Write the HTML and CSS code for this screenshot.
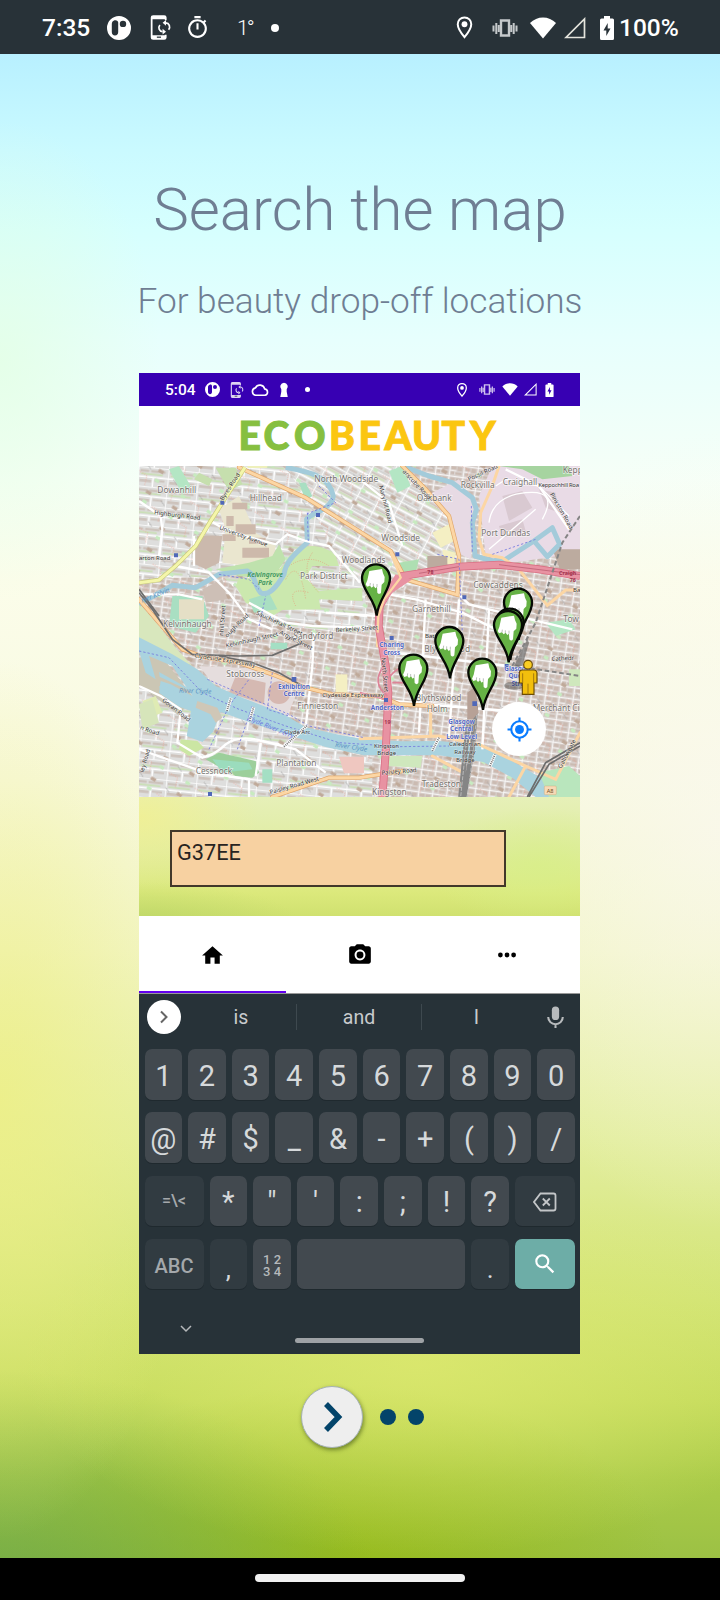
FILE: index.html
```html
<!DOCTYPE html>
<html lang="en">
<head>
<meta charset="utf-8">
<title>EcoBeauty onboarding</title>
<link rel="stylesheet" href="styles.css">
</head>
<body>
<svg class="defs" width="0" height="0" aria-hidden="true">
  <defs>
    <symbol id="i-p" viewBox="0 0 24 24"><path fill-rule="evenodd" fill="currentColor" d="M12 0a12 12 0 1 1 0 24a12 12 0 0 1 0-24zM7.500 4.300C5.500 5 4.800 6.500 4.800 8.500v7.500c0 2 1.200 3.500 3.200 3.500s3.200-1.500 3.200-3.500V6.500c0-1.500-1.500-2.700-3.700-2.200zM16 4.700a3.200 3.200 0 1 0 0 6.400a3.200 3.200 0 0 0 0-6.400z"/></symbol>
    <symbol id="i-phone" viewBox="0 0 24 24"><path fill="none" stroke="currentColor" stroke-width="1.700" d="M17 5V2.500q0-1.500-1.500-1.500H5Q3.500 1 3.500 2.500v19Q3.500 23 5 23h10.500q1.500 0 1.500-1.500V19"/><path fill="currentColor" d="M3.500 1H17v3H3.500zM3.500 19.500H17V23H3.500z"/><path stroke="#283238" stroke-width="1.200" d="M8.500 21.300h4"/><path fill="none" stroke="currentColor" stroke-width="1.600" d="M14 16c-3.300-.3-4.600-4-2.600-6.500M17 7.500c3.500.2 4.800 4 2.800 6.700"/><path fill="currentColor" d="M17.300 4.700v5.600l-3.300-2.800zM14 13.200v5.600l3.300-2.800z"/></symbol>
    <symbol id="i-timer" viewBox="0 0 24 24"><path fill="currentColor" d="M15 1H9v2h6V1zm-4 13h2V8h-2v6zm8.030-6.610 1.420-1.420c-.43-.51-.9-.99-1.410-1.410l-1.420 1.420A8.960 8.960 0 0 0 12 4a9 9 0 1 0 7.030 3.390zM12 20a7 7 0 1 1 0-14 7 7 0 0 1 0 14z"/></symbol>
    <symbol id="i-pin" viewBox="0 0 24 24"><path fill="none" stroke="currentColor" stroke-width="1.900" d="M12 2.300c-3.800 0-6.500 2.900-6.500 6.600C5.500 13.500 12 21.300 12 21.300s6.500-7.800 6.500-12.400c0-3.700-2.700-6.600-6.500-6.600z"/><circle cx="12" cy="8.900" r="2.800" fill="currentColor"/></symbol>
    <symbol id="i-vibrate" viewBox="0 0 26 24"><path fill="none" stroke="currentColor" stroke-width="2.400" d="M9 4.500h8v15H9z"/><path stroke="currentColor" stroke-width="2" d="M1.500 9.500v6M4.300 7v11M6.800 9v7M19.200 9v7M21.700 7v11M24.500 9.500v6"/></symbol>
    <symbol id="i-wifi" viewBox="0 0 26 22"><path fill="currentColor" d="M0 6C7-1.500 19-1.500 26 6L13 21.500z"/></symbol>
    <symbol id="i-signal" viewBox="0 0 22 22"><path fill="none" stroke="currentColor" stroke-width="1.700" d="M20.500 2v18.500H2z"/></symbol>
    <symbol id="i-battery" viewBox="0 0 14 24"><path fill-rule="evenodd" fill="currentColor" d="M4 0h6v2.500h2.500Q14 2.500 14 4v18.500q0 1.500-1.500 1.500h-11Q0 24 0 22.500V4q0-1.500 1.500-1.500H4zM7.700 7 3.500 14.500h2.800V20l4.200-7.500H7.700z"/></symbol>
    <symbol id="i-cloud" viewBox="0 0 24 24"><path fill="none" stroke="currentColor" stroke-width="2.200" d="M6.500 19a5 5 0 0 1-.5-9.900A6.500 6.500 0 0 1 18.200 10.500 4.300 4.300 0 0 1 18.500 19z"/></symbol>
    <symbol id="i-keyhole" viewBox="0 0 12 20"><path fill="currentColor" d="M6 1a5.200 5.200 0 0 1 3.600 8.800V13L11 20H1l1.400-7V9.800A5.200 5.200 0 0 1 6 1z"/></symbol>
    <g id="marker">
      <path d="M2 110C-2 60-42 35-42-2A42 42 0 0 1 42-2C42 35 7 60 2 110z" fill="#66b245" stroke="#050a04" stroke-width="7"/>
      <path d="M-20-24 18-30 21-17 26-6 25 9 17 17 15 41Q10 48 4 41L3 24-2 28-7 21-13 26-18 20-27 23-31 16-26 4z" fill="#fff"/>
      <path d="M-8 22v-8M-18 20l1-8M3 24v-9" stroke="#9aa39a" stroke-width="2"/>
    </g>
    <pattern id="blocks" width="42" height="34" patternUnits="userSpaceOnUse" patternTransform="rotate(8)">
      <rect width="42" height="34" fill="#dbd5d2"/><path d="M5 5h15v10H5zm18 0h15v13H23zM5 21h10v9H5zm14 1h19v8H19z" fill="#cbbbb2"/><path d="M0 0h42M0 0v34" stroke="#fff" stroke-width="4"/><path d="M0 18h21" stroke="#f7f5f4" stroke-width="2.500"/>
    </pattern>
    <pattern id="terraces" width="62" height="46" patternUnits="userSpaceOnUse" patternTransform="rotate(28)">
      <rect width="62" height="46" fill="#dfdfde"/><path d="M5 7h50v5H5zm0 23h24v7H5zm32 0h17v8H37z" fill="#cfc4bd"/><path d="M7 14h45v5H7z" fill="#cfe0bb"/><path d="M0 0h62M0 24h62M0 0v46" stroke="#fff" stroke-width="5"/><path d="M5 42h52" stroke="#c9c7c6" stroke-width="2"/>
    </pattern>
    <pattern id="west" width="90" height="58" patternUnits="userSpaceOnUse" patternTransform="rotate(6)">
      <rect width="90" height="58" fill="#dededd"/><path d="M6 8h26v7H6zm32 0h44v7H38zM6 38h35v8H6zm45-2h30v6H51z" fill="#cdc3bc"/><path d="M0 0h90M0 30h90M0 0v58M46 30v28" stroke="#fff" stroke-width="4.500"/><path d="M8 21h66" stroke="#c9dfb5" stroke-width="5"/>
    </pattern>
    <pattern id="speckle" width="91" height="73" patternUnits="userSpaceOnUse" patternTransform="rotate(31)">
      <path d="M5 12h30l9 28" fill="none" stroke="#f09a88" stroke-width="2" stroke-dasharray="3 4"/><path d="M57 48h17v10H57z" fill="#bfa999"/><path d="M62 5h14v10H62z" fill="#c7ebc0"/><path d="M18 55l18 8" stroke="#a8a8a8" stroke-width="2"/>
    </pattern>
  </defs>
</svg>

<main class="screen">
  <header class="status">
    <span class="status-time">7:35</span>
    <svg class="s-p"><use href="#i-p"/></svg>
    <svg class="s-phone"><use href="#i-phone"/></svg>
    <svg class="s-timer"><use href="#i-timer"/></svg>
    <span class="s-temp">1°</span>
    <i class="s-dot"></i>
    <span class="spacer"></span>
    <svg class="s-pin"><use href="#i-pin"/></svg>
    <svg class="s-vibrate"><use href="#i-vibrate"/></svg>
    <svg class="s-wifi"><use href="#i-wifi"/></svg>
    <svg class="s-signal"><use href="#i-signal"/></svg>
    <svg class="s-battery"><use href="#i-battery"/></svg>
    <span class="status-pct">100%</span>
  </header>

  <section class="intro">
    <h1 class="title">Search the map</h1>
    <p class="subtitle">For beauty drop-off locations</p>

    <div class="phone">
      <div class="p-status">
        <span class="p-time">5:04</span>
        <svg class="p-p"><use href="#i-p"/></svg>
        <svg class="p-phone"><use href="#i-phone"/></svg>
        <svg class="p-cloud"><use href="#i-cloud"/></svg>
        <svg class="p-key"><use href="#i-keyhole"/></svg>
        <i class="p-dot"></i>
        <span class="spacer"></span>
        <svg class="p-pin"><use href="#i-pin"/></svg>
        <svg class="p-vibrate"><use href="#i-vibrate"/></svg>
        <svg class="p-wifi"><use href="#i-wifi"/></svg>
        <svg class="p-signal"><use href="#i-signal"/></svg>
        <svg class="p-battery"><use href="#i-battery"/></svg>
      </div>

      <div class="brand">
        <svg width="441" height="60" viewBox="0 0 441 60">
          <g class="brand-text">
            <text x="99.500 124.500 155" y="43.500" fill="#86bf40" stroke="#86bf40">ECO</text>
            <text x="190 219.500 245.500 273 302.500 331" y="43.500" fill="#fbc611" stroke="#fbc611">BEAUTY</text>
          </g>
        </svg>
      </div>

      <div class="map">
        <svg class="map-art" viewBox="0 0 1323 993" width="441" height="331">
          <rect width="1323" height="993" fill="url(#blocks)"/>
          <path d="M0 0H430L660 230 690 500 400 480 250 330 0 340z" fill="url(#west)"/>
          <path d="M440 0H800L950 160 960 300 700 400 560 200z" fill="url(#terraces)"/>
          <path d="M0 560 250 735 440 800 700 880 700 993H0z" fill="url(#west)"/>
          <rect width="1323" height="993" fill="url(#speckle)"/>
          <path d="M1020 90 1060 0H1323V260L1120 290 1040 270z" fill="#e9dbe6"/>
          <path d="M860 90 960 40 1010 120 995 280 955 260 930 150z" fill="#e7dae4"/>
          <path d="M1080 0H1290L1300 30 1210 40 1150 10z" fill="#a6d4a0"/>
          <path d="M1090 90l60-15 30 50-70 40zM1200 70l50 10 10 60-40-15zM1080 180l70-20 10 35-70 20z" fill="#d9c9d1"/>
          <path d="M1050 170Q1060 90 1160 80T1210 160M1070 60 1100 40 1200 60 1290 150M1050 250 1190 130" stroke="#fff" stroke-width="4" fill="none"/>
          <path d="M175 210H250L240 290 200 310 160 290z" fill="#cbb9ad"/>
          <path d="M240 130 300 90 350 200 410 240 400 310 250 290 260 190z" fill="#eae6cf"/>
          <path d="M290 175h60v30h-60zM310 245h80v30h-80zM280 110h45v20h-45zM250 205h40v20h-40zM330 215h50v18h-50zM262 150h22v30h-22z" fill="#cdb9ab"/>
          <path d="M230 310 330 290 400 270 420 235 440 280 400 340 300 330z" fill="#bfe2ad"/>
          <path d="M300 335C360 340 420 335 450 270 490 225 560 235 590 270L600 300 520 300 500 335 540 375 670 365V405L540 400 545 430 430 432 400 450 320 410 290 360z" fill="#cbe8ae"/>
          <path d="M450 300q60-40 120 0M440 340q40-70 60 60M470 420q-30-60 40-40M520 260q-40 60 20 120" fill="none" stroke="#e59a78" stroke-width="2" stroke-dasharray="3 4"/>
          <path d="M330 400l60-20 25 50-70 10zM100 390h90l20 60-40 50-80-20zM480 50h20l20 40-20 15z" fill="#a9dfc2"/>
          <path d="M120 400h75v60h-75z" fill="#e5dfc6"/>
          <path d="M190 370 250 340 265 400 200 410z" fill="#cdbfb6"/>
          <path d="M90 10l30-10 35 60-25 25zM750 15l40-15 25 60-40 20zM1220 470l70-10 20 30-60 20z" fill="#b4e6c4"/>
          <path d="M230 5h60l20 50-40 20zM180 20l40 20-10 20-45-20z" fill="#c6dfae"/>
          <path d="M880 200l50-25 15 50-40 20zM910 250l40 10-5 40-30-10z" fill="#f4efc3"/>
          <path d="M865 270h60v40h-60zM1240 250h83v60h-60z" fill="#bcab9f"/>
          <path d="M780 290l60-10-10 40-50 5z" fill="#aedfb2"/>
          <path d="M0 410 60 480 110 545 160 600 0 520z" fill="#d8e7bd"/>
          <path d="M180 600 400 610 470 690 440 760 300 690 220 650z" fill="#e5dddd"/>
          <path d="M290 630 380 650 375 715 270 680z" fill="#d5b9b2"/><circle cx="420" cy="680" r="34" fill="#d6b8b1"/>
          <path d="M0 575 60 560 160 690 120 750 0 655z" fill="#cbc6b4"/>
          <path d="M10 705 50 690 70 740 30 755z" fill="#dfebb4"/>
          <path d="M0 514 100 565 175 610 230 660 310 695 430 742 500 784 600 806 675 820 790 826 900 825 1033 836 1110 880 1180 920 1260 972 1310 993H1190L1120 935 1033 888 900 868 675 868 560 843 440 804 330 768 245 738 222 798 190 828 143 810 156 735 120 722 60 680 65 645 95 655 160 690 100 600 30 570 50 640 20 620 0 555z" fill="#aad3df"/>
          <path d="M60 618 150 668 155 676 62 632zM66 655 150 700 150 706 60 664z" fill="#aad3df"/>
          <path d="M175 705l60 20 15 30-20 15-15-25-45-20z" fill="#cfc7b7"/>
          <path d="M125 820l50 5 20 20-45 25-30-20z" fill="#cbe6a3"/>
          <path d="M200 880 240 860 350 885 360 920 340 935 290 930z" fill="#9ccf9b"/>
          <path d="M220 880l110 10 10 20-90 10z" fill="#9bdcbd"/>
          <path d="M0 715 40 700 60 770 10 790z" fill="#d6e5ba"/>
          <path d="M590 625h35v55h-35z" fill="#f4efc3"/>
          <path d="M370 910h30v40h-30zM395 530h50v20h-50z" fill="#a4dfc4"/>
          <path d="M600 872h75v50h-60z" fill="#efc7c0"/>
          <path d="M1200 920 1290 900 1323 930V993H1230z" fill="#b9e6bd"/>
          <path d="M1290 610h33v50h-33zM740 870h110l-5 35-100-5z" fill="#cfe8bd"/>
          <g fill="none" stroke="#a3cbda" stroke-width="15" stroke-linejoin="round">
            <path d="M440 4C520 20 570 30 583 90 575 135 515 140 503 160L505 230C460 270 440 290 435 325 410 370 385 390 365 380 345 360 350 325 325 315L240 325 170 365 100 358 0 415"/>
            <path d="M790 0 870 30 940 50 1000 95 1012 130 1000 170 1008 270 1060 285 1100 280 1185 225 1240 185 1262 235 1225 272 1185 225"/>
          </g>
          <g fill="none" stroke="#fff" stroke-width="7">
            <path d="M0 105 65 150 70 190 60 270M215 165 240 180 300 205 410 235 445 205 500 225 570 240 663 350M165 210V300M110 300 210 320 270 380 330 460 400 490M330 410 440 470 520 480 680 485"/>
            <path d="M0 660 65 690 125 730 115 830 190 875Q230 865 260 835 300 805 370 825L470 850 560 920M500 784 520 600 525 500M720 380 830 400 970 440 1090 500M960 385 990 415 1090 440 1300 490M0 850 200 920 330 940V993M350 930 365 830M718 450 560 440M0 385 120 385 190 400"/>
            <path d="M720 700 920 720 1110 735M760 560 1110 600M860 400 840 800M960 400 930 810M1050 430 1030 850"/>
            <path d="M663 40 750 110 790 240M1100 10 1200 60 1290 190"/>
          </g>
          <g fill="none" stroke="#e0a569" stroke-width="13" stroke-linecap="round"><path d="M300 4 500 95 675 205 755 255 800 340 955 386 960 270 930 150 860 70 790 0"/><path d="M0 400 60 470 130 550 200 575 300 590 400 625 500 665 580 685 720 690 780 715 880 720"/><path d="M400 993 570 935 660 935 790 915"/></g>
          <g fill="none" stroke="#fcd6a4" stroke-width="9" stroke-linecap="round"><path d="M300 4 500 95 675 205 755 255 800 340 955 386 960 270 930 150 860 70 790 0"/><path d="M1080 0 1060 60 1025 140 1020 220 1035 265 1090 275 1140 310 1225 418 1280 372H1323"/><path d="M0 400 60 470 130 550 200 575 300 590 400 625 500 665 580 685 720 690 780 715 880 720"/><path d="M400 993 570 935 660 935 790 915"/><path d="M663 818 900 810 1020 835 1160 900 1250 940 1323 800M875 720 875 810M720 450 715 540M1160 900 1110 993M880 870 990 930 970 993"/></g>
          <path d="M318 4 250 110 215 165 170 240 110 300 60 342 0 350" fill="none" stroke="#c9ca7a" stroke-width="13"/>
          <path d="M318 4 250 110 215 165 170 240 110 300 60 342 0 350" fill="none" stroke="#f4f6aa" stroke-width="9"/>
          <path d="M1323 330 1200 310 1080 296 960 302 840 322 790 330 750 370 722 420 719 480 740 600 748 680 740 860 730 993" fill="none" stroke="#da7185" stroke-width="24"/>
          <path d="M1323 330 1200 310 1080 296 960 302 840 322 790 330 750 370 722 420 719 480 740 600 748 680 740 860 730 993" fill="none" stroke="#e892a2" stroke-width="19"/>
          <path d="M770 325 820 340 760 380 725 430 735 380z" fill="#e892a2"/>
          <path d="M755 260 785 335 735 400 718 450 716 500" fill="none" stroke="#fcd6a4" stroke-width="7"/>
          <path d="M663 680 740 700M745 640q40-50 60-30M735 600q-40 50 10 90M760 650h70" stroke="#dc8497" stroke-width="5" fill="none"/>
          <path d="M960 302 840 322M1080 296 1323 326" stroke="#b3546a" stroke-width="2" fill="none"/>
          <g fill="none" stroke="#6d6d6d" stroke-width="5"><path d="M0 380 40 430 100 520 160 565 300 570 400 568 490 530M240 570 340 590 420 620 490 660"/><path d="M0 370 60 450M1165 993 1220 890 1323 830M1170 993 1230 895 1323 840"/></g>
          <g fill="none" stroke="#858585" stroke-width="6" stroke-dasharray="14 8"><path d="M1323 150 1270 230 1190 470 1120 600M1130 600 1323 630"/></g>
          <path d="M1000 725 985 800 965 993M1010 720 1000 850 975 993" fill="none" stroke="#858585" stroke-width="15"/>
          <path d="M1000 725 985 800 965 993M1014 730 1004 850 985 993" fill="none" stroke="#b9b9b9" stroke-width="3" stroke-dasharray="12 4"/>
          <path d="M1125 600 1165 520 1170 530 1150 600z" fill="#666" opacity=".65"/>
          <path d="M985 680 1010 660 1018 740 985 780z" fill="#b7a196"/>
          <g fill="none" stroke="#7378df" stroke-width="2.500" stroke-dasharray="7 6"><path d="M0 555 90 575 190 680 300 730 440 780 600 830 780 842 930 840"/><path d="M205 640 320 690 450 745 510 780 675 815M210 850 270 720 330 640M240 325 330 340 360 370M505 140 508 230M540 60 590 110 500 145M360 480 380 390M895 265 960 280 970 500M997 120 1000 260M1060 265 1190 220M295 850 340 720M400 620 385 730 450 750"/></g>
          <path d="M264 735 276 695M332 765 344 723M435 842 505 778M880 855 900 815M1053 900 1068 865" stroke="#fff" stroke-width="10"/><path d="M264 735 276 695M332 765 344 723M435 842 505 778M880 855 900 815M1053 900 1068 865" stroke="#777" stroke-width="6" stroke-dasharray="3 3"/>
          <path fill="#5068b8" d="M244 104h12v12h-12zM531 141h12v12h-12zM105 262h12v12h-12zM769 259h12v12h-12zM970 388h12v12h-12zM458 633h14v14h-14zM752 510h12v12h-12zM735 696h12v12h-12zM1000 706h14v14h-14zM207 978h12v12h-12zM1097 594h12v12h-12z"/>
          <rect x="325" y="-20" width="60" height="26" rx="4" fill="#eef0bb"/>
          <g class="place">
            <text x="55" y="82">Dowanhill</text><text x="332" y="104">Hillhead</text><text x="526" y="48">North Woodside</text><text x="833" y="104">Oakbank</text><text x="965" y="65">Rockvilla</text><text x="1091" y="58">Craighall</text><text x="1271" y="21">Kepp</text><text x="727" y="225">Woodside</text><text x="608" y="290">Woodlands</text><text x="1027" y="210">Port Dundas</text><text x="483" y="340">Park District</text><text x="1003" y="366">Cowcaddens</text><text x="819" y="438">Garnethill</text><text x="72" y="482">Kelvinhaugh</text><text x="1273" y="467">Tow</text><text x="463" y="518">Sandyford</text><text x="262" y="634">Stobcross</text><text x="475" y="728">Finnieston</text><text x="412" y="901">Plantation</text><text x="170" y="924">Cessnock</text><text x="856" y="558">Blythswood</text><text x="830" y="706">Blythswood</text><text x="863" y="739">Holm</text><text x="1181" y="735">Merchant Ci</text><text x="848" y="964">Tradeston</text><text x="699" y="988">Kingston</text>
          </g>
          <g class="road">
            <text transform="translate(45 145) rotate(7)">Highburgh Road</text><text transform="translate(252 105) rotate(-57)">Byres Road</text><text transform="translate(240 190) rotate(20)">University Avenue</text><text x="0" y="283">arton Road</text><text transform="translate(720 60) rotate(76)">Maryhill Road</text><text transform="translate(790 18) rotate(47)">arscube Road</text><text transform="translate(990 46) rotate(-25)">Possil Road</text><text x="1198" y="62" textLength="122">Keppochhill Roa</text><text transform="translate(1232 85) rotate(60)">Pinkston Road</text><text transform="translate(350 445) rotate(25)">Sauchiehall Street</text><text transform="translate(253 510) rotate(-86)">nhill Street</text><text transform="translate(265 515) rotate(-45)">ough Road</text><text transform="translate(262 545) rotate(-13)">Kelvinhaugh Street</text><text transform="translate(420 503) rotate(27)">Argyle Street</text><text transform="translate(166 574) rotate(9)">Clydeside Expressway</text><text x="550" y="693">Clydeside Expressway</text><text transform="translate(68 705) rotate(38)">Govan Road</text><text transform="translate(2 790) rotate(18)">n Road</text><text transform="translate(14 920) rotate(-74)">ley Road</text><text transform="translate(394 985) rotate(-16)">Paisley Road West</text><text transform="translate(728 927) rotate(-5)">Paisley Road</text><text x="858" y="515">Bath Street</text><text transform="translate(727 575) rotate(85)">North Street</text><text transform="translate(1238 585) rotate(-3)">Cathedr</text><text x="436" y="804">Clyde Arc</text><text x="705" y="845">Kingston</text><text x="715" y="867">Bridge</text><text x="930" y="840">Caledonian</text><text x="946" y="864">Railway</text><text x="951" y="888">Bridge</text><text transform="translate(590 499) rotate(-4)">Berkeley Street</text><text x="1302" y="379">Ba</text><text transform="translate(1267 908) rotate(-62)">Gallowgate</text>
          </g>
          <g class="station"><text x="465" y="669">Exhibition</text><text x="465" y="691">Centre</text><text x="758" y="544">Charing</text><text x="758" y="566">Cross</text><text x="745" y="732">Anderston</text><text x="968" y="774">Glasgow</text><text x="968" y="796">Central</text><text x="968" y="818">Low Level</text><text x="1136" y="615">Glasgow</text><text x="1140" y="637">Queen</text><text x="1146" y="659">Street</text></g>
          <g class="water"><text transform="translate(120 680) rotate(2)">River Clyde</text><text transform="translate(588 842) rotate(9)">River Clyde</text><text transform="translate(10 410) rotate(-22)">iver Kelvin</text><text class="ferry" transform="translate(325 762) rotate(22)">Clyde River Ferry</text></g>
          <g class="park"><text x="378" y="333">Kelvingrove</text><text x="378" y="358">Park</text></g>
          <g class="shield"><text x="865" y="325">78</text><text x="1260" y="328">Craigh</text><text x="1292" y="347">76</text><text x="736" y="773">19</text></g>
          <rect x="1216" y="960" width="36" height="26" rx="3" fill="#f8d9b5" stroke="#c49a65"/><text class="a8" x="1223" y="980">A8</text>
          <ellipse cx="1125" cy="659" rx="30" ry="12" fill="#333" opacity=".4"/>
          <use href="#marker" x="711" y="339"/><use href="#marker" x="1137" y="412"/><use href="#marker" x="1112" y="472"/><use href="#marker" x="1107" y="479"/><use href="#marker" x="931" y="527"/><use href="#marker" x="823" y="610"/><use href="#marker" x="1030" y="622"/>
          <path d="M1150 612h34q10 0 10 10v29h-9v34h-35v-34h-9v-29q0-10 9-10z" fill="#f2bf0d" stroke="#6b4c05" stroke-width="3.500"/><path d="M1151 622v29M1184 622v29M1167 653v32" stroke="#a3780c" stroke-width="3"/><circle cx="1167" cy="596" r="13" fill="#f9cd24" stroke="#6b4c05" stroke-width="3.500"/>
        </svg>
        <div class="locate"><svg width="25" height="25" viewBox="0 0 24 24"><circle cx="12" cy="12" r="7.900" fill="none" stroke="#0a7cff" stroke-width="2"/><circle cx="12" cy="12" r="4.300" fill="#0a7cff"/><path d="M12 .5v4M12 19.500v4M.5 12h4M19.500 12h4" stroke="#0a7cff" stroke-width="2"/></svg></div>
      </div>

      <div class="search-area"><div class="field">G37EE</div></div>

      <nav class="tabs">
        <span class="tab active"><svg width="25" height="25" viewBox="0 0 24 24"><path d="M10 20v-6h4v6h5v-8h3L12 3 2 12h3v8z"/></svg></span>
        <span class="tab"><svg width="26" height="26" viewBox="0 0 24 24"><circle cx="12" cy="12" r="3.200"/><path d="M9 2 7.170 4H4c-1.100 0-2 .9-2 2v12c0 1.100.9 2 2 2h16c1.100 0 2-.9 2-2V6c0-1.100-.9-2-2-2h-3.170L15 2H9zm3 15c-2.760 0-5-2.240-5-5s2.240-5 5-5 5 2.240 5 5-2.240 5-5 5z"/></svg></span>
        <span class="tab"><svg width="26" height="26" viewBox="0 0 24 24"><circle cx="5.900" cy="12" r="2.200"/><circle cx="12" cy="12" r="2.200"/><circle cx="18.100" cy="12" r="2.200"/></svg></span>
      </nav>

      <div class="keyboard">
        <div class="suggest">
          <span class="expand"><svg width="16" height="16" viewBox="0 0 16 16"><path d="m5 2.500 5.500 5.500L5 13.500" fill="none" stroke="#666" stroke-width="2"/></svg></span>
          <span class="word w1">is</span><span class="word w2">and</span><span class="word w3">I</span>
          <svg class="mic" width="25" height="25" viewBox="0 0 24 24"><rect x="8.500" y="1.500" width="7" height="13" rx="3.500" fill="#b8bbbd"/><path d="M5 11.500a7 7 0 0 0 14 0M12 18.500v3.500" fill="none" stroke="#b8bbbd" stroke-width="2"/></svg>
        </div>
        <div class="keys">
          <div class="row ten"><b>1</b><b>2</b><b>3</b><b>4</b><b>5</b><b>6</b><b>7</b><b>8</b><b>9</b><b>0</b></div>
          <div class="row ten"><b>@</b><b>#</b><b>$</b><b>_</b><b>&amp;</b><b>-</b><b>+</b><b>(</b><b>)</b><b>/</b></div>
          <div class="row nine"><b class="dim sym">=\&lt;</b><b>*</b><b>"</b><b>'</b><b>:</b><b>;</b><b>!</b><b>?</b><b class="dim"><svg width="24" height="20" viewBox="0 0 24 20"><path d="M7.500 1.500h13q2 0 2 2v13q0 2-2 2h-13L1 10z" fill="none" stroke="#c3c6c8" stroke-width="1.800"/><path d="m9.800 6.500 7 7m0-7-7 7" stroke="#c3c6c8" stroke-width="1.800"/></svg></b></div>
          <div class="row six"><b class="dim abc">ABC</b><b class="dim low">,</b><b class="nums"><span>1 2</span><span>3 4</span></b><b></b><b class="dim low">.</b><b class="go"><svg width="26" height="26" viewBox="0 0 24 24"><path fill="#fff" d="M15.500 14h-.79l-.28-.27A6.470 6.470 0 0 0 16 9.500 6.500 6.500 0 1 0 9.500 16c1.610 0 3.090-.59 4.230-1.570l.27.28v.79l5 4.990L20.490 19l-4.990-5zm-6 0C7.010 14 5 11.990 5 9.500S7.010 5 9.500 5 14 7.010 14 9.500 11.990 14 9.500 14z"/></svg></b></div>
        </div>
        <div class="kb-foot">
          <svg width="12" height="8" viewBox="0 0 12 8"><path d="m1 1 5 5 5-5" fill="none" stroke="#b5b8ba" stroke-width="1.500"/></svg>
          <i class="kb-pill"></i>
        </div>
      </div>
    </div>

    <div class="pager">
      <span class="next"><svg width="20" height="30" viewBox="0 0 20 30"><path d="M3 2 15.500 15 3 28" fill="none" stroke="#03446a" stroke-width="5.500"/></svg></span>
      <i class="dot"></i><i class="dot"></i>
    </div>
  </section>

  <footer class="navbar"><i class="nav-pill"></i></footer>
</main>
</body>
</html>
```

FILE: styles.css
```css
* { box-sizing: border-box; }
body { margin: 0; font-family: Roboto, "Noto Sans", sans-serif; }
.defs { position: absolute; }
svg { display: block; flex: none; }
.spacer { flex: 1; }

.screen {
  width: 720px;
  height: 1600px;
  display: flex;
  flex-direction: column;
  overflow: hidden;
  background:
    radial-gradient(ellipse 200px 440px at 0 1100px, rgba(238, 239, 130, .75), rgba(238, 239, 130, 0)),
    radial-gradient(ellipse 260px 400px at 720px 830px, rgba(250, 248, 240, .7), rgba(250, 248, 240, 0)),
    radial-gradient(ellipse 400px 190px at 420px 1365px, rgba(224, 234, 112, .7), rgba(224, 234, 112, 0)),
    radial-gradient(ellipse 380px 230px at 0 1600px, rgba(108, 168, 70, .85), rgba(108, 168, 70, 0)),
    radial-gradient(ellipse 330px 180px at 340px 1565px, rgba(148, 184, 8, .65), rgba(148, 184, 8, 0)),
    radial-gradient(ellipse 160px 240px at 0 360px, rgba(226, 255, 222, .65), rgba(226, 255, 222, 0)),
    linear-gradient(#b8f0ff 54px, #cafaff 150px, #d6fffe 230px, #e7fffd 340px, #f6fff7 480px, #fbfdea 580px, #f8f9df 780px, #f2f5c7 950px, #e3ee9e 1140px, #d2e476 1300px, #c4db5c 1400px, #aacb49 1480px, #9cc144 1558px);
}

.status {
  height: 54px;
  padding: 1px 41px 0 42px;
  display: flex;
  align-items: center;
  background: #283238;
  color: #fff;
  font-size: 24.500px;
  font-weight: 500;
}
.status-time { width: 65px; }
.s-p { width: 24px; height: 24px; }
.s-phone { width: 25px; height: 25px; margin-left: 17px; }
.s-timer { width: 25px; height: 25px; margin-left: 12px; }
.s-temp { width: 30px; margin-left: 27px; font-size: 21px; font-weight: 300; letter-spacing: -2px; }
.s-dot { width: 8px; height: 8px; margin-left: 4px; border-radius: 50%; background: #fff; }
.s-pin { width: 25px; height: 25px; margin-right: 15px; }
.s-vibrate { width: 26px; height: 24px; margin-right: 12px; color: #c5c9cb; }
.s-wifi { width: 26px; height: 22px; margin-right: 8px; }
.s-signal { width: 22px; height: 22px; margin-right: 14px; color: #e4e4dc; }
.s-battery { width: 14px; height: 24px; margin-right: 5px; }
.status-pct { width: 60px; white-space: nowrap; }

.intro {
  height: 1504px;
  display: flex;
  flex-direction: column;
  align-items: center;
  color: #6f7e93;
}
.title { margin: 120px 0 0; height: 72px; font-size: 60px; line-height: 72px; font-weight: 300; white-space: nowrap; }
.subtitle { margin: 34px 0 0; height: 42px; font-size: 35.200px; line-height: 42px; font-weight: 300; white-space: nowrap; }

.phone { width: 441px; height: 981px; margin: 51px 0 0 139px; align-self: flex-start; flex: none; }
.p-status {
  height: 33px;
  padding: 0 26px;
  display: flex;
  align-items: center;
  background: #3700b3;
  color: #fff;
  font-size: 15.500px;
  font-weight: 500;
}
.p-time { width: 40px; padding-top: 1px; }
.p-p { width: 15px; height: 15px; }
.p-phone { width: 16px; height: 16px; margin-left: 9px; color: #ded5f2; }
.p-cloud { width: 18px; height: 18px; margin-left: 6px; }
.p-key { width: 10px; height: 15px; margin-left: 10px; }
.p-dot { width: 5px; height: 5px; margin-left: 16px; border-radius: 50%; background: #fff; }
.p-pin { width: 16px; height: 16px; margin-right: 9px; }
.p-vibrate { width: 16px; height: 15px; margin-right: 7px; color: #cfc2ee; }
.p-wifi { width: 16px; height: 13px; margin-right: 6px; }
.p-signal { width: 13px; height: 13px; margin-right: 8px; }
.p-battery { width: 9px; height: 14px; }

.brand { height: 60px; background: #fff; }
.brand-text { font-family: Lato, sans-serif; font-weight: 900; font-size: 39px; stroke-width: 1px; }

.map { position: relative; height: 331px; overflow: hidden; }
.map text { font-family: "Noto Sans", sans-serif; }
.place { font-size: 25px; fill: #77736f; stroke: #fff; stroke-width: 4px; paint-order: stroke; stroke-opacity: .65; }
.road { font-size: 18px; fill: #333; stroke: #fff; stroke-width: 3px; paint-order: stroke; stroke-opacity: .5; }
.station { font-size: 19px; font-weight: 700; fill: #5367c4; text-anchor: middle; stroke: #fff; stroke-width: 3px; paint-order: stroke; stroke-opacity: .7; }
.water { font-size: 20px; font-style: italic; fill: #5b94c4; }
.ferry { fill: #6f7ae0; }
.park { font-size: 20px; font-style: italic; font-weight: 600; fill: #3b9460; text-anchor: middle; }
.shield { font-size: 16px; font-weight: 700; fill: #a3324e; }
.a8 { font-size: 17px; fill: #73501f; }
.locate {
  position: absolute;
  left: 353px;
  top: 236px;
  width: 54px;
  height: 54px;
  border-radius: 50%;
  background: #fff;
  display: grid;
  place-items: center;
}

.search-area {
  height: 119px;
  padding: 33px 0 0 31px;
  background:
    radial-gradient(ellipse 120px 70px at 0 20px, rgba(242, 240, 145, .8), rgba(242, 240, 145, 0)),
    radial-gradient(ellipse 110px 60px at 400px 70px, rgba(216, 239, 137, .8), rgba(216, 239, 137, 0)),
    radial-gradient(ellipse 160px 40px at 0 125px, rgba(180, 210, 100, .6), rgba(180, 210, 100, 0)),
    linear-gradient(#e6f0b8, #dfeca0 45%, #dce97c 80%, #d0e170);
}
.field {
  width: 336px;
  height: 57px;
  padding: 8px 0 0 5px;
  border: 2px solid rgba(20, 18, 12, .8);
  background: #f7d1a1;
  color: #282421;
  font-size: 21.700px;
  line-height: 26px;
}

.tabs { height: 78px; display: grid; grid-template-columns: repeat(3, 1fr); background: #fff; border-bottom: 1px solid #999; }
.tab { display: grid; place-items: center; padding-top: 3px; border-bottom: 2px solid transparent; }
.tab.active { border-color: #6200ee; }

.keyboard { height: 360px; background: #273238; color: #d6d9db; }
.suggest { height: 46px; display: flex; align-items: center; font-size: 19.500px; }
.expand { width: 34px; height: 34px; margin: 0 14px 0 8px; border-radius: 50%; background: #fff; display: grid; place-items: center; }
.word { height: 26px; line-height: 28px; text-align: center; color: #c8cbcd; }
.w1 { width: 102px; border-right: 1px solid #3e494f; padding-right: 9px; }
.w2 { width: 125px; border-right: 1px solid #3e494f; }
.w3 { width: 109px; }
.mic { margin-left: 12px; }
.keys { padding: 9px 5px 0 5.500px; display: grid; gap: 12.800px; }
.row { display: grid; gap: 6px; height: 50.500px; }
.ten { grid-template-columns: repeat(10, 1fr); }
.nine { grid-template-columns: 59px repeat(7, 1fr) 60px; }
.six { grid-template-columns: 59px 37.700px 37.700px 1fr 37.700px 60px; }
.row b {
  display: grid;
  place-items: center;
  align-content: center;
  border-radius: 7px;
  background: #42494f;
  box-shadow: 0 1px #1f292e;
  font-size: 29px;
  line-height: 34px;
  font-weight: 400;
  padding-top: 3px;
}
.row .dim { background: #313b41; }
.row .sym { font-size: 16px; font-weight: 500; color: #a4a8ab; padding: 0; }
.row .abc { font-size: 20px; font-weight: 500; color: #a4a8ab; }
.row .low { padding-top: 10px; font-size: 26px; }
.row .nums { font-size: 13px; line-height: 12px; font-weight: 500; color: #b6b9bb; }
.row .go { background: #6dada7; padding: 0; }
.kb-foot { height: 64px; padding: 34px 0 0 41px; display: flex; align-items: flex-start; }
.kb-foot svg { margin-top: 2px; }
.kb-pill { width: 129px; height: 5px; margin: 15px 0 0 103px; border-radius: 3px; background: #9ea2a5; }

.pager { height: 62px; margin: 32px 0 0 301px; align-self: flex-start; display: flex; align-items: center; }
.next { width: 62px; height: 62px; border-radius: 50%; background: #eee; border: 1px solid #a6b2b4; box-shadow: 1px 2px 4px rgba(50, 70, 10, .55); display: grid; place-items: center; margin-right: 17px; }
.next svg { margin-left: 1px; }
.dot { width: 16px; height: 16px; border-radius: 50%; background: #03446a; margin-right: 12px; }

.navbar { height: 42px; background: #000; display: flex; justify-content: center; align-items: center; }
.nav-pill { width: 210px; height: 8px; margin-top: -3px; border-radius: 4px; background: #f1f1f1; }
```
